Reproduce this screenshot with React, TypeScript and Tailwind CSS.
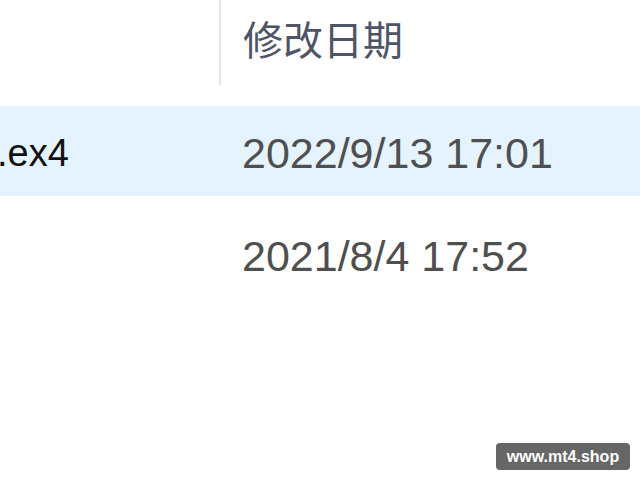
const ROWS = [
  { name: '.ex4', date: '2022/9/13 17:01', selected: true },
  { name: '', date: '2021/8/4 17:52', selected: false },
];

export default function App() {
  return (
    <div
      className="relative w-[640px] h-[480px] overflow-hidden bg-white"
      style={{ fontFamily: '"Liberation Sans", "Noto Sans CJK SC", sans-serif' }}
    >
      {/* Column header */}
      <div className="flex h-[106px]">
        <div className="w-[219px] shrink-0" />
        <div className="flex h-[85px]">
          <div className="w-[2px] bg-[#e5e5e5]" />
          <div
            className="pl-[22px] pt-[18px] text-[40px] leading-none text-[#4d5566]"
            style={{ fontFamily: '"Noto Sans CJK SC", sans-serif' }}
          >
            修改日期
          </div>
        </div>
      </div>

      {/* File rows */}
      <div className="flex flex-col gap-[13px]">
        {ROWS.map((row) => (
          <div
            key={row.date}
            className={`flex items-center h-[90px] pt-[4px] ${row.selected ? 'bg-[#e5f3ff]' : ''}`}
          >
            <div className="w-[221px] shrink-0">
              <span className="block ml-[-3px] text-[38px] leading-none text-[#111]">{row.name}</span>
            </div>
            <div className="pl-[21px] text-[43px] leading-none text-[#4f4f4f]">{row.date}</div>
          </div>
        ))}
      </div>

      {/* Watermark */}
      <div className="absolute left-[496px] top-[443px] w-[134px] h-[27px] rounded-[4px] bg-[#666] flex items-center justify-center text-[16px] font-bold text-white">
        www.mt4.shop
      </div>
    </div>
  );
}
